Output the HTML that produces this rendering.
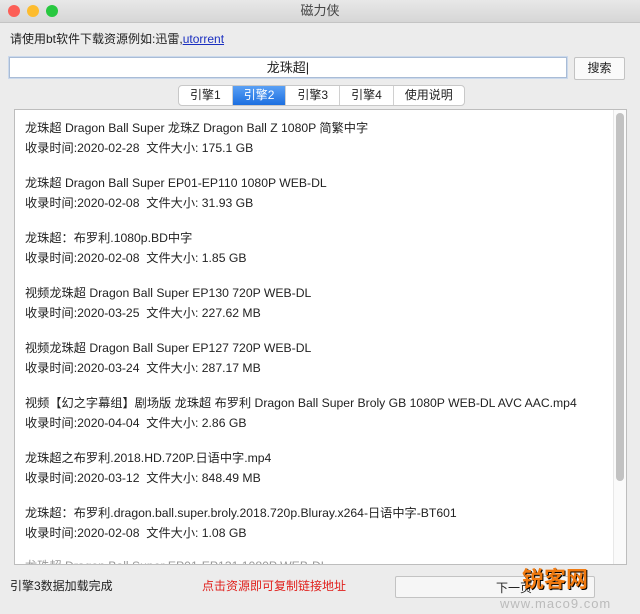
<!DOCTYPE html>
<html><head><meta charset="utf-8"><style>
body{margin:0;width:640px;height:614px;background:#ececec;font-family:"Liberation Sans","Noto Sans CJK SC",sans-serif;position:relative;overflow:hidden;color:#222}
.abs{position:absolute}
.tb{left:0;top:0;width:640px;height:22px;background:linear-gradient(#e8e8e8,#d6d6d6);border-bottom:1px solid #c4c4c4;text-align:center;font-size:13px;line-height:22px;color:#444}
.dot{width:12px;height:12px;border-radius:50%;top:5px}
.box{left:14px;top:109px;width:611px;height:454px;background:#fff;border:1px solid #bdbdbd;overflow:hidden}
.e{position:absolute;left:10px;font-size:12.2px;line-height:20px;color:#222;white-space:nowrap}
.tabs{top:85px;left:178px;height:19px;display:flex;border:1px solid #c8c8c8;border-radius:4px;background:#fff;font-size:12px;overflow:hidden}
.tabs div{padding:0 11px;line-height:19px;border-right:1px solid #d0d0d0}
.tabs .on{background:linear-gradient(#5aa0f5,#1c6fe0);color:#fff}
</style></head><body>
<div class="abs tb">磁力侠</div>
<div class="abs dot" style="left:8px;background:#fc5f57"></div>
<div class="abs dot" style="left:27px;background:#fdbc2e"></div>
<div class="abs dot" style="left:46px;background:#28c840"></div>
<div class="abs" style="left:10px;top:31px;font-size:12px;line-height:16px">请使用bt软件下载资源例如:迅雷,<span style="color:#1a2fc0;text-decoration:underline">utorrent</span></div>
<div class="abs" style="left:9px;top:57px;width:556px;height:19px;background:#fff;border:1px solid #a9bcd6;box-shadow:0 0 0 1px #cbd9ec;text-align:center;font-size:13px;line-height:19px">龙珠超|</div>
<div class="abs" style="left:574px;top:57px;width:49px;height:21px;background:#fafafa;border:1px solid #c3c3c3;border-radius:2px;text-align:center;font-size:12px;line-height:21px">搜索</div>
<div class="abs tabs"><div>引擎1</div><div class="on">引擎2</div><div>引擎3</div><div>引擎4</div><div style="border:none">使用说明</div></div>
<div class="abs box">
<div class="e" style="top:8px">龙珠超 Dragon Ball Super 龙珠Z Dragon Ball Z 1080P 简繁中字<br>收录时间:2020-02-28&nbsp;&nbsp;文件大小: 175.1 GB</div>
<div class="e" style="top:63px">龙珠超 Dragon Ball Super EP01-EP110 1080P WEB-DL<br>收录时间:2020-02-08&nbsp;&nbsp;文件大小: 31.93 GB</div>
<div class="e" style="top:118px">龙珠超：布罗利.1080p.BD中字<br>收录时间:2020-02-08&nbsp;&nbsp;文件大小: 1.85 GB</div>
<div class="e" style="top:173px">视频龙珠超 Dragon Ball Super EP130 720P WEB-DL<br>收录时间:2020-03-25&nbsp;&nbsp;文件大小: 227.62 MB</div>
<div class="e" style="top:228px">视频龙珠超 Dragon Ball Super EP127 720P WEB-DL<br>收录时间:2020-03-24&nbsp;&nbsp;文件大小: 287.17 MB</div>
<div class="e" style="top:283px">视频【幻之字幕组】剧场版 龙珠超 布罗利 Dragon Ball Super Broly GB 1080P WEB-DL AVC AAC.mp4<br>收录时间:2020-04-04&nbsp;&nbsp;文件大小: 2.86 GB</div>
<div class="e" style="top:338px">龙珠超之布罗利.2018.HD.720P.日语中字.mp4<br>收录时间:2020-03-12&nbsp;&nbsp;文件大小: 848.49 MB</div>
<div class="e" style="top:393px">龙珠超：布罗利.dragon.ball.super.broly.2018.720p.Bluray.x264-日语中字-BT601<br>收录时间:2020-02-08&nbsp;&nbsp;文件大小: 1.08 GB</div>
<div class="e" style="top:446px;color:#999">龙珠超 Dragon Ball Super EP01-EP131 1080P WEB-DL</div>
<div class="abs" style="left:598px;top:0;width:13px;height:454px;background:#fafafa;border-left:1px solid #e8e8e8"></div>
<div class="abs" style="left:601px;top:3px;width:8px;height:368px;background:#c2c2c2;border-radius:4px"></div>
</div>
<div class="abs" style="left:10px;top:578px;font-size:12px;line-height:16px">引擎3数据加载完成</div>
<div class="abs" style="left:202px;top:578px;font-size:12px;line-height:16px;color:#e0201c">点击资源即可复制链接地址</div>
<div class="abs" style="left:395px;top:576px;width:200px;height:22px;background:#f6f6f6;border:1px solid #c3c3c3;border-radius:2px;font-size:12px;line-height:22px;padding-left:100px;box-sizing:border-box">下一页</div>
<div class="abs" style="left:522px;top:566px;font-size:22px;font-weight:bold;color:#f07a10;line-height:28px;text-shadow:1px 1px 0 #000">锐客网</div>
<div class="abs" style="left:500px;top:596px;font-size:13px;color:#bbb;letter-spacing:1px">www.maco9.com</div>
</body></html>
